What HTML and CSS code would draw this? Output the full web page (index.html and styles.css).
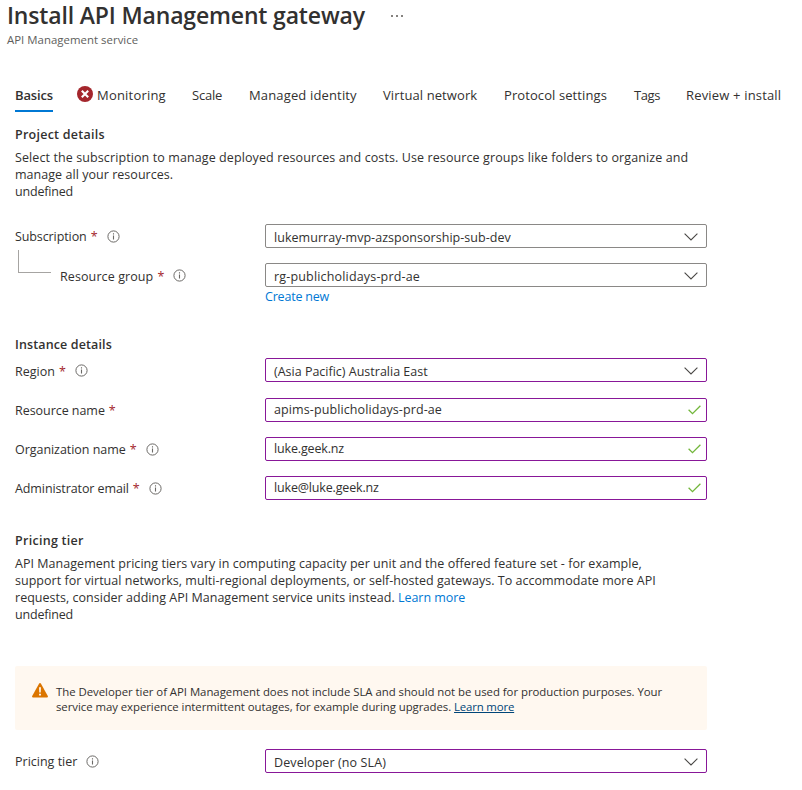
FILE: index.html
```html
<!DOCTYPE html>
<html lang="en">
<head>
<meta charset="utf-8">
<title>Install API Management gateway</title>
<link rel="stylesheet" href="styles.css">
</head>
<body>
<svg class="defs" aria-hidden="true">
  <symbol id="info" viewBox="0 0 13 13"><circle cx="6.5" cy="6.5" r="5.6" fill="none" stroke="#6b6966"/><path d="M6.5 5.5v4M6.5 3.2v1.2" stroke="#6b6966" stroke-width="1.1"/></symbol>
  <symbol id="chevron" viewBox="0 0 14 8"><path d="M.6.7 7 7 13.4.7" fill="none" stroke="#4a4846" stroke-width="1.1"/></symbol>
  <symbol id="check" viewBox="0 0 13 10"><path d="M.6 4.8 4.5 8.6 12.4.8" fill="none" stroke="#72b63b" stroke-width="1.3"/></symbol>
</svg>
<header class="header">
  <div class="title-row">
    <h1>Install API Management gateway</h1>
    <svg class="more" viewBox="0 0 12 2"><path d="M0 0h2v2H0zM5 0h2v2H5zM10 0h2v2h-2z" fill="#85827f"/></svg>
  </div>
  <p class="subtitle">API Management service</p>
</header>
<nav class="tabs">
  <a class="tab tab-basics active">Basics</a>
  <a class="tab tab-monitoring"><svg class="error" viewBox="0 0 16 16"><circle cx="8" cy="8" r="8" fill="#a4262c"/><path d="m4.8 4.8 6.4 6.4m0-6.4-6.4 6.4" stroke="#fff" stroke-width="2.1"/></svg><span>Monitoring</span></a>
  <a class="tab tab-scale">Scale</a>
  <a class="tab tab-identity">Managed identity</a>
  <a class="tab tab-network">Virtual network</a>
  <a class="tab tab-protocol">Protocol settings</a>
  <a class="tab tab-tags">Tags</a>
  <a class="tab tab-review">Review + install</a>
</nav>
<main>
  <section class="project">
    <h2 class="wide-bold">Project details</h2>
    <p class="text"><span class="loose">Select the subscription to manage deployed resources and costs. Use resource groups like folders to organize and</span><br><span class="slack">manage all your resources.</span><br><span class="tightest">undefined</span></p>
    <div class="row">
      <label class="label"><span class="tight">Subscription</span><b>*</b><svg class="info"><use href="#info"/></svg></label>
      <div class="field select"><span class="slack">lukemurray-mvp-azsponsorship-sub-dev</span><svg class="chevron"><use href="#chevron"/></svg></div>
    </div>
    <div class="row">
      <div class="branch"></div>
      <label class="label child low"><span class="loose">Resource group</span><b>*</b><svg class="info"><use href="#info"/></svg></label>
      <div class="field select"><span class="looser">rg-publicholidays-prd-ae</span><svg class="chevron"><use href="#chevron"/></svg></div>
    </div>
    <a class="create tightest">Create new</a>
  </section>
  <section class="instance">
    <h2>Instance details</h2>
    <div class="row">
      <label class="label low"><span>Region</span><b>*</b><svg class="info"><use href="#info"/></svg></label>
      <div class="field select edited"><span>(Asia Pacific) Australia East</span><svg class="chevron"><use href="#chevron"/></svg></div>
    </div>
    <div class="row">
      <label class="label"><span class="snug">Resource name</span><b>*</b></label>
      <div class="field input edited"><span class="loose">apims-publicholidays-prd-ae</span><svg class="check"><use href="#check"/></svg></div>
    </div>
    <div class="row">
      <label class="label"><span class="snug">Organization name</span><b>*</b><svg class="info"><use href="#info"/></svg></label>
      <div class="field input edited"><span class="tighter">luke.geek.nz</span><svg class="check"><use href="#check"/></svg></div>
    </div>
    <div class="row">
      <label class="label"><span class="tight">Administrator email</span><b>*</b><svg class="info"><use href="#info"/></svg></label>
      <div class="field input edited"><span class="tighter">luke@luke.geek.nz</span><svg class="check"><use href="#check"/></svg></div>
    </div>
  </section>
  <section class="pricing">
    <h2>Pricing tier</h2>
    <p class="text"><span class="slack">API Management pricing tiers vary in computing capacity per unit and the offered feature set - for example,</span><br><span class="slight">support for virtual networks, multi-regional deployments, or self-hosted gateways. To accommodate more API</span><br><span class="slight">requests, consider adding API Management service units instead. </span><a class="link snug">Learn more</a><br><span class="tightest">undefined</span></p>
    <div class="notice">
      <svg class="warning" viewBox="0 0 16 15"><path d="M8 0q.6 0 1 .7l6.800 12.400q.5 1.400-.9 1.400H1.100q-1.400 0-.9-1.400L7 .7Q7.400 0 8 0Z" fill="#db7500"/><path d="M7.100 4.300h1.800L8.700 9.500H7.300zM7.100 10.700h1.800v1.800H7.100z" fill="#fff"/></svg>
      <p><span class="notice-start">The Developer tier of API Management does not include SLA and should not be used for production purposes. Your</span><br><span class="notice-end">service may experience intermittent outages, for example during upgrades. </span><a class="tighter">Learn more</a></p>
    </div>
    <div class="row">
      <label class="label"><span>Pricing tier</span><svg class="info"><use href="#info"/></svg></label>
      <div class="field select edited"><span class="loose">Developer (no SLA)</span><svg class="chevron"><use href="#chevron"/></svg></div>
    </div>
  </section>
</main>
</body>
</html>
```
FILE: styles.css
```css
* { box-sizing: border-box; }
body {
  margin: 0;
  background: #fff;
  color: #323130;
  font: 12.5px/17px "Open Sans", "Noto Sans", sans-serif;
  overflow: hidden;
}
h1, h2, p { margin: 0; }
svg { flex: none; }
.defs { display: none; }

.header { padding-left: 7px; height: 80px; }
.title-row { display: flex; align-items: center; height: 32px; }
h1 { font-size: 23px; line-height: 30px; padding-bottom: 2px; font-weight: 600; letter-spacing: -.16px; width: 384px; white-space: nowrap; }
.more { width: 12px; height: 2px; }
.subtitle { font-size: 11.4px; line-height: 16px; letter-spacing: .03px; color: #605e5c; }

.tabs { display: flex; height: 32px; padding-left: 15px; font-size: 13px; line-height: 30px; white-space: nowrap; }
.tab { flex: none; height: 32px; }
.tab-basics { width: 38px; margin-right: 24px; letter-spacing: -.14px; }
.active { font-weight: 600; border-bottom: 2px solid #0078d4; }
.tab-monitoring { display: flex; align-items: center; width: 115px; letter-spacing: .2px; line-height: 30px; height: 30px; }
.error { width: 16px; height: 16px; margin: 0 4px 2px 0; }
.tab-scale { width: 57px; letter-spacing: -.23px; }
.tab-identity { width: 134px; letter-spacing: .15px; }
.tab-network { width: 121px; letter-spacing: .1px; }
.tab-protocol { width: 130px; letter-spacing: .09px; }
.tab-tags { width: 52px; letter-spacing: -.4px; }
.tab-review { letter-spacing: .17px; }

main { padding: 14px 0 0 15px; width: 707px; }
h2 { font-size: 12.5px; line-height: 17px; font-weight: 600; letter-spacing: .13px; }
.wide-bold { letter-spacing: .25px; }
.pricing h2 { letter-spacing: .28px; }
.text { margin: 6px 0 24px; white-space: nowrap; }
.row { position: relative; display: flex; align-items: center; height: 24px; margin-top: 15px; }
.label { display: flex; align-items: center; width: 250px; flex: none; }
.label.low { padding-top: 2px; }
.label b { margin-left: 4px; font-weight: 400; font-size: 12.5px; color: #a4262c; }
.info { width: 13px; height: 13px; margin-left: 9px; }
.low .info { margin-bottom: 1px; }
.child { padding-left: 45px; }
.branch { position: absolute; left: 3px; top: -13px; width: 33px; height: 23px; border: solid #a6a4a2; border-width: 0 0 1px 1px; }
.field { display: flex; align-items: center; justify-content: space-between; width: 442px; height: 24px; padding: 0 5px 0 8px; border: 1px solid #8a8886; border-radius: 2px; white-space: nowrap; }
.select { padding-right: 8px; }
.select span { padding-top: 2px; }
.input span { padding-bottom: 1px; }
.edited { border-color: #881798; }
.chevron { width: 14px; height: 8px; margin-top: 1px; }
.check { width: 13px; height: 10px; }
.create { display: block; margin: 1px 0 0 250px; color: #0078d4; }
.link { color: #0078d4; }

.instance { margin-top: 31px; }
.instance h2 + .row { margin-top: 5px; }
.instance h2 + .row + .row { margin-top: 16px; }
.pricing { margin-top: 32px; }
.pricing .text { margin-bottom: 43px; }
.notice { display: flex; width: 692px; height: 64px; padding: 17px 0 0 17px; background: #fff8f0; border-radius: 2px; font-size: 11.4px; line-height: 15px; white-space: nowrap; }
.notice p { padding-top: 1px; }
.warning { width: 16px; height: 15px; margin-right: 8px; }
.notice a { color: #004578; text-decoration: underline; }
.notice-start { letter-spacing: -.037px; }
.notice-end { letter-spacing: -.055px; }
.notice + .row { margin-top: 19px; }

.loose { letter-spacing: .1px; }
.looser { letter-spacing: .17px; }
.slack { letter-spacing: .04px; }
.slight { letter-spacing: .02px; }
.snug { letter-spacing: -.045px; }
.tight { letter-spacing: -.1px; }
.tighter { letter-spacing: -.16px; }
.tightest { letter-spacing: -.2px; }
```
